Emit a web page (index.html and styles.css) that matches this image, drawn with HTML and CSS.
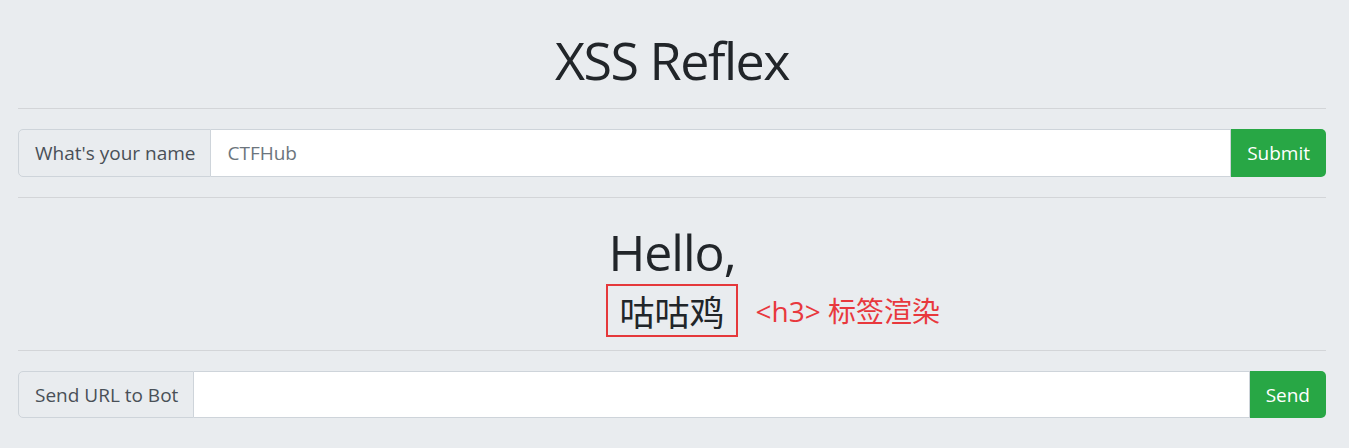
FILE: index.html
```html
<!DOCTYPE html>
<html lang="zh">
<head>
<meta charset="utf-8">
<title>XSS Reflex</title>
<link rel="stylesheet" href="styles.css">
</head>
<body>
<div class="page">
  <h1 class="title">XSS Reflex</h1>
  <hr class="rule rule-top">
  <form class="input-group">
    <span class="addon">What's your name</span>
    <input class="field" type="text" placeholder="CTFHub">
    <button class="btn" type="button">Submit</button>
  </form>
  <hr class="rule rule-mid">
  <div class="greeting">
    <h2 class="hello">Hello,</h2>
    <div class="name-row">
      <h3 class="name">咕咕鸡<span class="note">&lt;h3&gt; 标签渲染</span></h3>
    </div>
  </div>
  <hr class="rule rule-bottom">
  <form class="input-group input-group-bot">
    <span class="addon">Send URL to Bot</span>
    <input class="field" type="text">
    <button class="btn" type="button">Send</button>
  </form>
</div>
</body>
</html>
```

FILE: styles.css
```css
html, body {
  margin: 0;
  padding: 0;
  background: #e9ecef;
  height: 100%;
}
body {
  font-family: "Open Sans", "Noto Sans CJK SC", sans-serif;
  color: #212529;
}
.page {
  width: 1308px;
  margin-left: 18px;
}
.title {
  margin: 0;
  padding: 25px 0 13px;
  font-size: 52px;
  font-weight: 400;
  line-height: 70px;
  text-align: center;
  letter-spacing: -1.5px;
}
.rule {
  border: 0;
  border-top: 1px solid #d3d5d8;
  margin: 0;
}
.rule-top { margin-bottom: 20px; }
.rule-mid { margin-top: 20px; }
.rule-bottom { margin-bottom: 20px; }
.input-group {
  display: flex;
  height: 48px;
  margin: 0;
}
.input-group-bot { height: 47px; }
.addon {
  display: flex;
  align-items: center;
  padding: 0 15px 0 16px;
  background: #e9ecef;
  border: 1px solid #ced4da;
  border-radius: 5px 0 0 5px;
  color: #495057;
  font-size: 19px;
  white-space: nowrap;
}
.field {
  flex: 1;
  min-width: 0;
  border: 1px solid #ced4da;
  border-left: 0;
  background: #fff;
  padding: 0 16px;
  font-family: inherit;
  font-size: 19px;
  color: #495057;
  outline: none;
}
.field::placeholder { color: #6c757d; }
.btn {
  border: 0;
  background: #28a745;
  color: #fff;
  font-family: inherit;
  font-size: 19px;
  padding: 0 16px;
  border-radius: 0 5px 5px 0;
}
.greeting {
  text-align: center;
  padding: 24px 0 13px;
}
.hello {
  margin: 0;
  font-size: 50px;
  font-weight: 400;
  line-height: 60px;
  letter-spacing: -1px;
}
.name-row {
  display: flex;
  justify-content: center;
  padding-top: 2px;
}
.name {
  position: relative;
  margin: 0;
  font-family: "Noto Sans CJK SC", sans-serif;
  font-size: 35px;
  font-weight: 400;
  line-height: 49px;
  padding: 0 11px;
  border: 2px solid #e5383b;
}
.note {
  position: absolute;
  left: calc(100% + 20px);
  top: 50%;
  transform: translateY(-50%);
  white-space: nowrap;
  color: #e8383d;
  font-family: "Open Sans", "Noto Sans CJK SC", sans-serif;
  font-size: 28px;
  line-height: 1;
}
```
